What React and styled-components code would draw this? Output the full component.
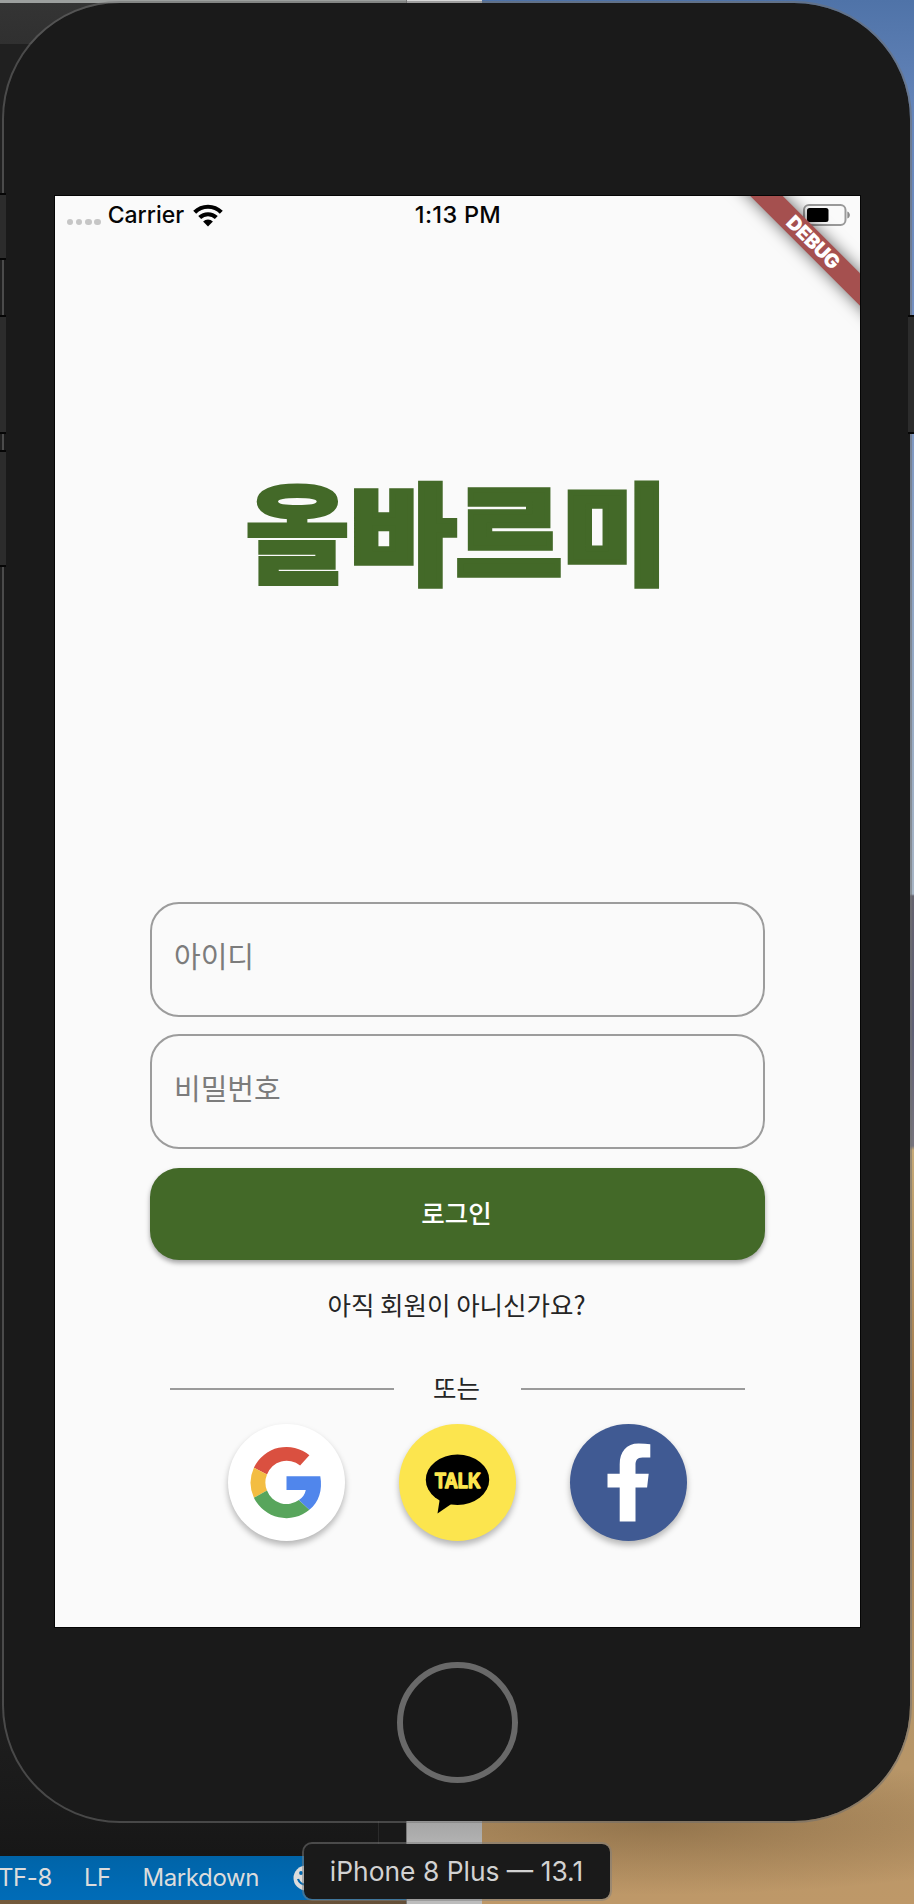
import React from "react";
import styled, { createGlobalStyle } from "styled-components";

const GlobalStyle = createGlobalStyle`
  *, *::before, *::after { box-sizing: border-box; }
  body { margin: 0; background: #1c1c1c; }
  button, input { font: inherit; }
`;

const latin = `Inter, "Liberation Sans", sans-serif`;
const korean = `"Noto Sans CJK KR", "Noto Sans", sans-serif`;

/* Desktop behind the simulator */
const Desktop = styled.main`
  position: relative;
  width: 914px;
  height: 1904px;
  overflow: hidden;
  display: grid;
  grid-template-columns: 406px 76px 1fr;
  font-family: ${latin};
`;

const EditorWindow = styled.section`
  display: flex;
  flex-direction: column;
  background: #191919;
  border-top: 3px solid #9c9f9e;
`;

const TitleBar = styled.div`
  height: 41px;
  background: linear-gradient(#343434, #303030);
`;

const EditorBody = styled.div`
  flex: 1;
  width: 379px;
  border-right: 1px solid #2b2b2b;
  background: linear-gradient(#202020, #202020 90%, #171717);
`;

const EditorStatus = styled.footer`
  display: flex;
  align-items: center;
  height: 44px;
  padding-bottom: 1px;
  background: linear-gradient(#0064a8, #006cb8);
  color: #dcdcdc;
  font-size: 24px;
  white-space: nowrap;
`;

const StatusItem = styled.span`
  margin-left: ${(p) => p.$gap}px;
  letter-spacing: ${(p) => p.$track || 0}px;
`;

const WallpaperEdge = styled.div`
  height: 4px;
  background: linear-gradient(90deg, #745a3b, #655039);
`;

const PaperWindow = styled.section`
  background: linear-gradient(#d8d8d8 0 1820px, #a6a6a6 1823px, #bcbcbc 1860px);
  border-left: 1px solid #777;
`;

const Wallpaper = styled.section`
  background:
    radial-gradient(ellipse 420px 70px at 40% 1825px, rgba(60, 40, 15, 0.3), transparent),
    linear-gradient(
      #4f73a8 0,
      #6686bb 120px,
      #7590c0 350px,
      #8fa5c4 600px,
      #a7b5c5 894px,
      #65636f 896px,
      #5f6075 1030px,
      #77747d 1146px,
      #c7aa77 1150px,
      #a27a4c 1400px,
      #b59568 1700px,
      #be9868 1904px
    );
`;

/* Simulator window */
const Phone = styled.article`
  position: absolute;
  left: 2px;
  top: 1px;
  width: 910px;
  height: 1822px;
  padding: 193px 0 0 51px;
  border: 2px solid rgba(112, 112, 112, 0.55);
  border-radius: 118px;
  background: #1a1a1a;
  background-clip: padding-box;
`;

const SideButton = styled.i`
  position: absolute;
  top: ${(p) => p.$top}px;
  ${(p) => (p.$right ? "right: 0;" : "left: 0;")}
  width: 6px;
  height: ${(p) => p.$size}px;
  background: #2c2c2c;
  border: solid #060606;
  border-width: 2px 0;
`;

const Screen = styled.div`
  position: relative;
  overflow: hidden;
  display: flex;
  flex-direction: column;
  align-items: center;
  width: 805px;
  height: 1431px;
  background: #fafafa;
  outline: 1px solid #050505;
`;

const PhoneStatus = styled.header`
  display: grid;
  grid-template-columns: 1fr auto 1fr;
  align-items: center;
  width: 100%;
  height: 38px;
  padding: 0 9px 0 11px;
  color: #050505;
  font-size: 23px;
  font-weight: 500;
  line-height: 38px;
`;

const Clock = styled.span`
  padding-right: 1px;
  font-size: 23.5px;
  letter-spacing: 0.3px;
`;

const CarrierGroup = styled.div`
  display: flex;
  align-items: center;
`;

const SignalDots = styled.span`
  display: flex;
  gap: 2.7px;
  margin: 14px 7px 0 1px;
`;

const Dot = styled.i`
  width: 6.4px;
  height: 6.4px;
  border-radius: 50%;
  background: #c6c6c6;
`;

const WifiSvg = styled.svg`
  width: 30px;
  height: 23px;
  margin-left: 9px;
`;

const BatterySvg = styled.svg`
  justify-self: end;
  width: 48px;
  height: 22px;
`;

const DebugRibbon = styled.div`
  position: absolute;
  right: -53px;
  top: 35px;
  width: 200px;
  height: 23px;
  transform: rotate(45deg);
  background: #a5504f;
  box-shadow: 0 0 16px rgba(0, 0, 0, 0.6);
  color: #fff;
  font-size: 19.5px;
  font-weight: 900;
  letter-spacing: -0.4px;
  line-height: 23px;
  text-align: center;
`;

const Logo = styled.h1`
  margin: 234px 0 0 -3px;
  height: 120px;
  color: #436928;
  font-family: ${korean};
  font-size: 115px;
  font-weight: 900;
  line-height: 120px;
  white-space: nowrap;
  transform: scaleY(0.94);
  -webkit-text-stroke: 6px #436928;
`;

const DenseSyllable = styled.span`
  -webkit-text-stroke-width: 2px;
`;

const LoginForm = styled.form`
  display: flex;
  flex-direction: column;
  width: 615px;
  margin-top: 314px;
  font-family: ${korean};
`;

const Field = styled.input`
  height: 115px;
  margin-bottom: ${(p) => p.$gap}px;
  padding: 0 22px 10px;
  border: 2px solid #9c9c9c;
  border-radius: 29px;
  background: transparent;
  font-size: 29px;
  outline: none;
  &::placeholder { color: #7c7c7c; opacity: 1; }
`;

const LoginButton = styled.button`
  height: 92px;
  border: 0;
  border-radius: 29px;
  background: #436928;
  color: #fff;
  font-size: 25.5px;
  font-weight: 500;
  padding: 0 2px 6px 0;
  box-shadow: 0 3px 5px rgba(0, 0, 0, 0.35);
`;

const SignUp = styled.a`
  margin-top: 24px;
  padding-right: 2px;
  color: #252525;
  font-family: ${korean};
  font-size: 25.5px;
  line-height: 40px;
  white-space: nowrap;
`;

const Divider = styled.div`
  display: flex;
  align-items: center;
  width: 575px;
  margin-top: 43px;
  color: #252525;
  font-family: ${korean};
  font-size: 25.5px;
  line-height: 40px;
`;

const Rule = styled.i`
  flex: 0 0 224px;
  height: 2px;
  background: #9a9a9a;
`;

const DividerLabel = styled.span`
  flex: 1;
  padding: 0 2px 3px 0;
  text-align: center;
`;

const SocialRow = styled.div`
  display: flex;
  gap: 54px;
  margin-top: 14px;
`;

const SocialButton = styled.button`
  width: 117px;
  height: 117px;
  padding: 0;
  border: 0;
  border-radius: 50%;
  background: ${(p) => p.$color};
  box-shadow: 0 4px 6px rgba(0, 0, 0, 0.28);
`;

const BrandSvg = styled.svg`
  display: block;
  width: 117px;
  height: 117px;
`;

const HomeButton = styled.button`
  display: block;
  width: 121px;
  height: 121px;
  margin: 35px 0 0 342px;
  border: 6px solid #696969;
  border-radius: 50%;
  background: transparent;
`;

const DeviceLabel = styled.div`
  position: absolute;
  left: 302px;
  top: 1842px;
  width: 310px;
  height: 59px;
  padding-right: 1px;
  border: 2px solid rgba(125, 125, 125, 0.5);
  border-radius: 10px;
  background: #1a1a1a;
  background-clip: padding-box;
  color: #d2d2d2;
  font-size: 26.4px;
  line-height: 55px;
  text-align: center;
  white-space: nowrap;
`;

const SmileySvg = styled.svg`
  flex: none;
  width: 26px;
  height: 26px;
  margin-left: 34px;
`;

const Smiley = () => (
  <SmileySvg viewBox="0 0 26 26">
    <circle cx="13" cy="13" r="12.5" fill="#dcdcdc" />
    <circle cx="8" cy="8" r="1.9" fill="#0068b0" />
    <circle cx="18" cy="8" r="1.9" fill="#0068b0" />
    <path d="M5 14a8.5 8.5 0 0 0 16 0" fill="none" stroke="#0068b0" strokeWidth="2.2" />
  </SmileySvg>
);

const Wifi = () => (
  <WifiSvg viewBox="0 0 30 23">
    <g fill="none" stroke="#000" strokeWidth="4.2">
      <path d="M1.7 8.2a19 19 0 0 1 26.6 0" />
      <path d="M6.7 13.6a12 12 0 0 1 16.6 0" />
    </g>
    <path d="M15 22.6l-4.9-5a7 7 0 0 1 9.8 0z" />
  </WifiSvg>
);

const Battery = () => (
  <BatterySvg viewBox="0 0 48 22">
    <rect x="1" y="1" width="41.5" height="20" rx="5" fill="none" stroke="#999" strokeWidth="2" />
    <rect x="4" y="4" width="21.5" height="14" rx="2.5" />
    <path d="M44.3 7.5c3.4 1 3.4 6 0 7z" fill="#8b8b8b" />
  </BatterySvg>
);

const GoogleMark = () => (
  <BrandSvg viewBox="-58.5 -58.5 117 117">
    <path fill="#da5040" d="M22.9-27.3A36 36 0 0 0-32.6-14.8L-19.5-8A21 21 0 0 1 13.6-17z" />
    <path fill="#f3bd42" d="M-32.6-14.8A36 36 0 0 0-32.6 15.2L-19.5 8A21 21 0 0 1-19.5-8z" />
    <path fill="#58a55c" d="M-32.6 15.2A36 36 0 0 0 22.9 27.3L12.4 17.6A21 21 0 0 1-19.5 8z" />
    <path fill="#5086ec" d="M0-6.3H33.8C36.2 7.5 32.5 19.5 22.9 27.3L12.4 17.6Q18.2 13.6 19.3 7.5H0z" />
  </BrandSvg>
);

const TalkMark = () => (
  <BrandSvg viewBox="-58.5 -58.5 117 117">
    <ellipse cy="-2.8" rx="31.7" ry="25.2" />
    <path d="M-17.5 15L-20 31L-4 20z" />
    <text
      y="5"
      textAnchor="middle"
      textLength="46"
      lengthAdjust="spacingAndGlyphs"
      fill="#fce54e"
      stroke="#fce54e"
      strokeWidth="1.6"
      strokeLinejoin="round"
      fontFamily="Inter, sans-serif"
      fontSize="20"
      fontWeight="600"
    >
      TALK
    </text>
  </BrandSvg>
);

const FacebookMark = () => (
  <BrandSvg viewBox="-58.5 -58.5 117 117">
    <path
      fill="#fff"
      d="M-8.8 39V5H-21V-8.7H-8.8V-18C-8.8-31-2-39 10-39Q17-39 21.8-38.2V-25H14C8.5-25 7-22 7-17.5V-8.7H20.2L18.6 5H7V39z"
    />
  </BrandSvg>
);

export default function App() {
  return (
    <>
      <GlobalStyle />
      <Desktop>
        <EditorWindow>
          <TitleBar />
          <EditorBody />
          <EditorStatus>
            <StatusItem $gap={-2} $track={-0.4}>TF-8</StatusItem>
            <StatusItem $gap={32} $track={-0.6}>LF</StatusItem>
            <StatusItem $gap={32} $track={-0.4}>Markdown</StatusItem>
            <Smiley />
          </EditorStatus>
          <WallpaperEdge />
        </EditorWindow>
        <PaperWindow />
        <Wallpaper />

        <Phone>
          <Screen>
            <PhoneStatus>
              <CarrierGroup>
                <SignalDots>
                  <Dot />
                  <Dot />
                  <Dot />
                  <Dot />
                </SignalDots>
                Carrier
                <Wifi />
              </CarrierGroup>
              <Clock>1:13 PM</Clock>
              <Battery />
            </PhoneStatus>
            <Logo>
              <DenseSyllable>올</DenseSyllable>바르미
            </Logo>
            <LoginForm>
              <Field $gap={17} placeholder="아이디" />
              <Field $gap={19} placeholder="비밀번호" />
              <LoginButton type="button">로그인</LoginButton>
            </LoginForm>
            <SignUp>아직 회원이 아니신가요?</SignUp>
            <Divider>
              <Rule />
              <DividerLabel>또는</DividerLabel>
              <Rule />
            </Divider>
            <SocialRow>
              <SocialButton $color="#fff" aria-label="Google">
                <GoogleMark />
              </SocialButton>
              <SocialButton $color="#fce54e" aria-label="KakaoTalk">
                <TalkMark />
              </SocialButton>
              <SocialButton $color="#405a93" aria-label="Facebook">
                <FacebookMark />
              </SocialButton>
            </SocialRow>
            <DebugRibbon>DEBUG</DebugRibbon>
          </Screen>
          <HomeButton aria-label="Home" />
        </Phone>

        <SideButton $top={193} $size={67} />
        <SideButton $top={315} $size={119} />
        <SideButton $top={450} $size={117} />
        <SideButton $right $top={315} $size={119} />
        <DeviceLabel>iPhone 8 Plus — 13.1</DeviceLabel>
      </Desktop>
    </>
  );
}
